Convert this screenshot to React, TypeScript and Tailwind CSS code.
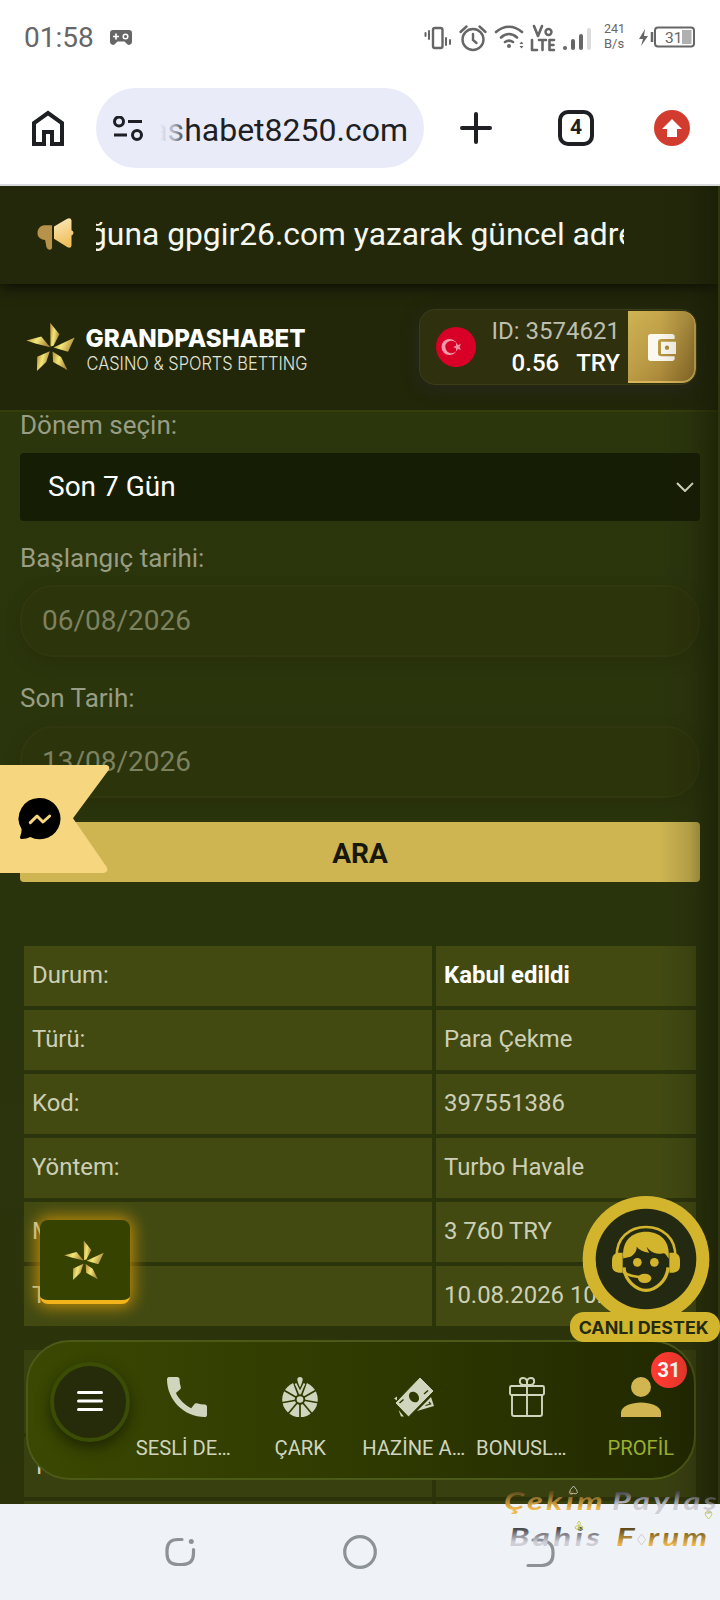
import React from 'react';

const rows = [
  { label: 'Durum:', value: 'Kabul edildi', strong: true },
  { label: 'Türü:', value: 'Para Çekme' },
  { label: 'Kod:', value: '397551386' },
  { label: 'Yöntem:', value: 'Turbo Havale' },
  { label: 'Miktar:', value: '3 760 TRY' },
  { label: 'Tarih:', value: '10.08.2026 10:04' },
];

const Pinwheel: React.FC<{ className?: string; id: string }> = ({ className, id }) => (
  <svg className={className} viewBox="78 411 148 148">
    <defs>
      <linearGradient id={id} x1="0" y1="0" x2="1" y2="0.3">
        <stop offset="0" stopColor="#b58a35" />
        <stop offset="0.5" stopColor="#f3e878" />
        <stop offset="1" stopColor="#b08c3c" />
      </linearGradient>
    </defs>
    <g fill={`url(#${id})`}>
      <path d="M151 413l28 35-18 35-9 2z" />
      <path d="M225 458l-20 43-44-13z" />
      <path d="M158 500l26 17 19 39-43-24z" />
      <path d="M150 499l-11 33-28 27 1-43z" />
      <path d="M79 467l45-12 27 32-42-10z" />
    </g>
  </svg>
);

const StatusBar = () => (
  <div className="flex h-[74px] shrink-0 items-center text-[#666]">
    <span className="mt-[2px] ml-6 text-[28px] leading-none">01:58</span>
    <svg className="ml-[16px] h-[15px] w-[22px]" viewBox="0 0 22 15">
      <path d="M3 0h16a3 3 0 0 1 3 3v9a3 3 0 0 1-5.500 1.500L14.500 11.500h-7l-2 2A3 3 0 0 1 0 12V3a3 3 0 0 1 3-3z" fill="#666" />
      <path d="M6 3.500v6M3 6.500h6" stroke="#fff" strokeWidth="1.700" />
      <circle cx="15.500" cy="6.500" r="2.300" fill="none" stroke="#fff" strokeWidth="1.500" />
    </svg>
    <svg className="ml-auto h-[30px] w-[208px]" viewBox="424 20 208 30" fill="none" stroke="#666" strokeWidth="2" strokeLinecap="round">
      <rect x="433" y="26" width="9.500" height="20" rx="2" strokeWidth="2.400" />
      <path d="M425.500 31v3M429 29v8M446 36v7M450 38v4" />
      <circle cx="473" cy="37.500" r="10.500" strokeWidth="2.400" />
      <path d="M473 32v6l3.500 3M460.500 30l6-5.500M485.500 30l-6-5.500" strokeWidth="2.400" />
      <path d="M496 30c8-7 18-7 26 0M501 35.500c5-4.500 11-4.500 16 0M505 40c3-2 5-2 8 0" strokeWidth="2.600" />
      <circle cx="509" cy="44" r="2" fill="#666" stroke="none" />
      <path d="M519.500 42l2-2.500 2 2.500zM519.500 44l2 2.500 2-2.500z" fill="#666" stroke="none" />
      <path d="M534 24l4 10 4-10M532 38v10h5M539 38h7M542.500 38v10M554 38h-4.500v10h4.500M549.500 43h4" strokeWidth="2.600" strokeLinejoin="round" />
      <circle cx="548.500" cy="30" r="3" strokeWidth="2.400" />
      <circle cx="565" cy="46" r="2" fill="#666" stroke="none" />
      <path d="M573 39v7M581 34v12" strokeWidth="4" />
      <path d="M589 28v18" stroke="#dcdcdc" strokeWidth="4" />
    </svg>
    <div className="-ml-[28px] w-[29px] text-[13px] leading-[15px] -mt-[2px]">
      <div className="text-[12.500px]">241</div>
      <div>B/s</div>
    </div>
    <svg className="mr-6 ml-1 h-[24px] w-[59px]" viewBox="637 24 59 24">
      <path d="M645 28l-6 10h4l-2 7 7-10h-4z" fill="#666" />
      <path d="M652 31v10" stroke="#666" strokeWidth="2.500" />
      <rect x="655" y="26.500" width="39" height="19" rx="3" fill="none" stroke="#666" strokeWidth="2" />
      <rect x="682" y="29" width="9.500" height="14" fill="#b0b0b0" />
      <text x="665" y="41.500" fontSize="15.500" fill="#666">31</text>
    </svg>
  </div>
);

const BrowserBar = () => (
  <div className="relative z-20 flex h-[112px] shrink-0 items-start border-b-2 border-[#d9dadc] bg-white pt-[14px]">
    <svg className="mt-[21px] ml-[31px] h-[38px] w-[34px]" viewBox="0 0 34 38" fill="none" stroke="#1e1f22" strokeWidth="4">
      <path d="M3 35V14L17 4l14 10v21H21V23h-8v12z" />
    </svg>
    <div className="ml-[31px] flex h-20 w-[328px] items-center rounded-full bg-[#e9ebf8]">
      <svg className="ml-[17px] h-[25px] w-[31px]" viewBox="0 0 31 25" fill="none" stroke="#1e1f25" strokeWidth="3">
        <circle cx="6" cy="5.500" r="4.500" />
        <path d="M15 5.500h14M1 19h13" />
        <circle cx="24" cy="19" r="4.500" />
      </svg>
      <div className="relative ml-4 flex h-12 w-[248px] items-center justify-end overflow-hidden">
        <span className="mt-[3px] text-[32px] whitespace-nowrap text-[#1e1f25]">ashabet8250.com</span>
        <div className="absolute inset-y-0 left-0 w-7 bg-gradient-to-r from-[#e9ebf8] via-[#e9ebf8]/70 to-transparent" />
      </div>
    </div>
    <svg className="mt-[24px] ml-9 h-8 w-8" viewBox="0 0 32 32" stroke="#1e1f22" strokeWidth="4" strokeLinecap="round">
      <path d="M16 2v28M2 16h28" />
    </svg>
    <div className="mt-[22px] ml-[66px] flex h-9 w-9 items-center justify-center rounded-[10px] border-4 border-[#1e1f22] text-[21px] font-bold text-[#1e1f22]">
      4
    </div>
    <svg className="mt-[22px] ml-[60px] h-9 w-9" viewBox="0 0 36 36">
      <circle cx="18" cy="18" r="18" fill="#d23c2e" />
      <path d="M18 9l10 10h-5v8H13v-8H8z" fill="#fff" />
    </svg>
  </div>
);

const Ticker = () => (
  <div className="relative z-10 flex h-[98px] shrink-0 items-center bg-[#23280a] shadow-[0_2px_14px_rgba(0,0,0,0.8)]">
    <svg className="-mt-[2px] ml-[37px] h-8 w-[37px]" viewBox="111 96 111 97">
      <defs>
        <linearGradient id="horn" x1="0" y1="0" x2="0.3" y2="1">
          <stop offset="0" stopColor="#fbeac0" />
          <stop offset="1" stopColor="#f0bf5c" />
        </linearGradient>
      </defs>
      <path d="M156 118v70q-2 5-9 4-6-1-8-8l-4-21c-14-2-24-9-23-23 1-14 10-22 24-22z" fill="#b6924b" />
      <path d="M162 122l40-24q11-4 13 5v30q6 2 6 8t-6 8v31q-2 9-12 5l-41-26z" fill="url(#horn)" />
    </svg>
    <div className="-mt-[2px] ml-[22px] w-[528px] overflow-hidden whitespace-nowrap">
      <span className="-ml-[7px] text-[31.800px] leading-[48px] text-[#f6f7ee]">ğuna gpgir26.com yazarak güncel adre</span>
    </div>
  </div>
);

const Header = () => (
  <div className="flex h-32 shrink-0 items-start border-b-2 border-[#363e0c] bg-[#22270a]">
    <Pinwheel className="mt-[38px] ml-[26px] h-[49px] w-[49px]" id="logoGold" />
    <svg className="mt-[38px] ml-[9px] h-[54px] w-[226px]" viewBox="84 322 226 54">
      <text x="85.500" y="347" textLength="220" lengthAdjust="spacingAndGlyphs" fontSize="25" fontWeight="800" fill="#fff" fontFamily="Inter, sans-serif">GRANDPASHABET</text>
      <text x="86.500" y="370" textLength="221" lengthAdjust="spacingAndGlyphs" fontSize="18.500" fontWeight="300" fill="#e2e4d5" fontFamily="Inter, sans-serif">CASINO &amp; SPORTS BETTING</text>
    </svg>
    <div className="mt-[25px] ml-[109px] flex h-[76px] w-[278px] overflow-hidden rounded-[16px] border border-[#3b3d19] bg-[#2e300e] shadow-[0_4px_16px_rgba(40,40,30,0.9)]">
      <svg className="mt-[17px] ml-4 h-10 w-10" viewBox="0 0 40 40">
        <circle cx="20" cy="20" r="20" fill="#d80027" />
        <circle cx="13.500" cy="20" r="8" fill="#f29aa9" />
        <circle cx="15.500" cy="20" r="6.200" fill="#d80027" />
        <path d="M17 20l3-1.200v-3l2 2.300 3-1-1.500 2.900 1.500 2.900-3-1-2 2.300v-3z" fill="#f08c9d" />
      </svg>
      <div className="ml-auto pr-2 text-right text-[24px] leading-8">
        <div className="mt-[5px] text-[#bcbfae]">ID: 3574621</div>
        <div className="font-medium whitespace-pre text-white">0.56<span className="ml-[17px]">TRY</span></div>
      </div>
      <div className="my-px flex w-[68px] items-center justify-center rounded-r-[14px] border-r-2 border-b-2 border-[#d8b55a] bg-gradient-to-br from-[#cfb353] via-[#bb9a45] to-[#95732c]">
        <svg className="mt-[2px] ml-[2px] h-[27px] w-[28px]" viewBox="864 445 84 81">
          <path d="M872 445h64q8 0 8 8v7h-40q-10 0-10 10v32q0 10 10 10h40v6q0 8-8 8h-64q-8 0-8-8v-65q0-8 8-8z" fill="#fbf8f0" />
          <path d="M903 468h45v37h-45z" fill="#fbf8f0" />
          <circle cx="921" cy="486" r="6.500" fill="#ab8a3c" />
        </svg>
      </div>
    </div>
  </div>
);

const DateField: React.FC<{ value: string }> = ({ value }) => (
  <div className="h-[72px] rounded-[34px] border-2 border-[#31380f] bg-[#2c340b] pl-5 text-[28px] leading-[68px] text-[#7c8160] shadow-[0_6px_14px_rgba(38,42,8,0.5)]">
    {value}
  </div>
);

const SearchForm = () => (
  <div className="px-5 text-[26px] leading-8 text-[#989d83]">
    <div className="-mt-[3px]">Dönem seçin:</div>
    <div className="mt-3 flex h-[68px] items-center rounded-[4px] bg-[#161d05] pr-[6px] pl-7 text-[28px] text-white">
      Son 7 Gün
      <svg className="ml-auto h-[10px] w-[18px]" viewBox="0 0 18 10" fill="none" stroke="#e4e8d2" strokeWidth="2">
        <path d="M1 1l8 8 8-8" />
      </svg>
    </div>
    <div className="mt-[21px] mb-[11px]">Başlangıç tarihi:</div>
    <DateField value="06/08/2026" />
    <div className="mt-[25px] mb-3">Son Tarih:</div>
    <DateField value="13/08/2026" />
    <button className="mt-6 block h-[60px] w-full rounded-[4px] bg-[#ceb552] pt-[3px] text-[28px] font-bold text-[#17180a]">
      ARA
    </button>
  </div>
);

const Transactions = () => (
  <div className="px-6 text-[23.900px] text-[#cdd0b6]">
    <div className="mt-16 grid grid-cols-[408px_260px] gap-1">
      {rows.map((row) => (
        <React.Fragment key={row.label}>
          <div className="h-[60px] bg-[#424a12] pl-2 leading-[58px]">{row.label}</div>
          <div className={row.strong ? 'h-[60px] bg-[#424a12] pl-2 leading-[58px] font-bold text-white' : 'h-[60px] bg-[#424a12] pl-2 leading-[58px] whitespace-nowrap'}>
            {row.value}
          </div>
        </React.Fragment>
      ))}
    </div>
    <div className="mt-6 grid grid-cols-[408px_260px] gap-1">
      <div className="h-[83px] bg-[#394010]" />
      <div className="h-[83px] bg-[#394010]" />
      <div className="h-[60px] bg-[#394010] pl-2 leading-[58px]">Türü:</div>
      <div className="h-[60px] bg-[#394010]" />
      <div className="h-[60px] bg-[#394010]" />
      <div className="h-[60px] bg-[#394010]" />
    </div>
  </div>
);

const MessengerRibbon = () => (
  <svg className="absolute top-[765px] left-0 h-[108px] w-[110px]" viewBox="0 75 330 324">
    <path d="M0 75h318q14 2 8 15L219 235l101 146q7 14-9 18H0z" fill="#f7d680" />
    <path d="M121 174a62 62 0 1 1-30 117q-14 7-28 6-5-2-2-9 4-10 4-20a62 62 0 0 1 56-94z" fill="#000" />
    <path d="M91 248l20-20 18 18 20-18" fill="none" stroke="#f7d680" strokeWidth="9" strokeLinecap="round" strokeLinejoin="round" />
  </svg>
);

const PinwheelButton = () => (
  <div className="absolute top-[1220px] left-10 flex h-[84px] w-[90px] items-center justify-center rounded-[8px] border-b-4 border-[#f2b31b] bg-[#354200] shadow-[0_0_16px_3px_rgba(214,150,10,0.85)]">
    <Pinwheel className="-mt-[1px] -ml-[2px] h-10 w-10" id="buttonGold" />
  </div>
);

const LiveSupport = () => (
  <svg className="absolute top-[1196px] left-[570px] z-20 h-[146px] w-[150px]" viewBox="630 48 450 438">
    <circle cx="858" cy="238" r="190" fill="#d3b52d" />
    <rect x="630" y="396" width="450" height="90" rx="42" fill="#d3b52d" />
    <circle cx="858" cy="237" r="151" fill="#242a12" />
    {/* headband and hair */}
    <path d="M770 232c-2-58 38-91 88-91s90 33 88 91" fill="none" stroke="#d3b52d" strokeWidth="8" />
    <path d="M790 236c-6-54 26-81 68-81s74 27 68 81c-6-8-8-14-14-16-14 4-40 0-52-20 2 8 4 12 8 18-18-2-30-8-38-18 2 14-12 30-26 32-8 2-12 2-14 4z" fill="#d3b52d" />
    <path d="M775 218q-19 2-19 22v16q0 20 20 22h12v-60zM941 218q19 2 19 22v16q0 20-20 22h-12v-60z" fill="#d3b52d" />
    <path d="M792 262c2 40 38 69 66 69s64-29 66-69" fill="none" stroke="#d3b52d" strokeWidth="10" />
    <circle cx="832" cy="247" r="13" fill="#d3b52d" />
    <circle cx="883" cy="247" r="13" fill="#d3b52d" />
    <path d="M790 275c16 14 36 16 62 16" fill="none" stroke="#d3b52d" strokeWidth="8" />
    <ellipse cx="854" cy="295" rx="20" ry="14" fill="#d3b52d" />
    <text x="656" y="463" textLength="390" lengthAdjust="spacingAndGlyphs" fontSize="50" fontWeight="700" fill="#242a0c" fontFamily="Inter, sans-serif">CANLI DESTEK</text>
  </svg>
);

const wheelSpokes = [20, 60, 100, 140, 180, 220, 260, 300, 340];

const WheelIcon = () => (
  <svg className="h-10 w-10" viewBox="0 0 40 40">
    <circle cx="20" cy="22.500" r="17.800" fill="#d0d5bd" />
    {wheelSpokes.map((angle) => (
      <path key={angle} d="M20 22.500V4" stroke="#2f3b00" strokeWidth="1.700" transform={`rotate(${angle} 20 22.500)`} />
    ))}
    <path d="M13.500 3.500L20 17l6.500-13.500z" fill="#2f3b00" />
    <path d="M15.500 6.500l4.500 9 4.500-9" fill="none" stroke="#d0d5bd" strokeWidth="1.800" />
    <path d="M20 0a2.700 2.700 0 0 1 2.700 2.700Q22.500 5 20 10.500 17.500 5 17.300 2.700A2.700 2.700 0 0 1 20 0z" fill="#d0d5bd" />
    <circle cx="20" cy="22.500" r="5.200" fill="#2f3b00" />
    <circle cx="20" cy="22.500" r="3.300" fill="#d0d5bd" />
  </svg>
);

const MoneyIcon = () => (
  <svg className="h-10 w-10" viewBox="0 0 40 40">
    <path d="M0 21.500l3-2v4zM4.500 33l5.500 6.500H7zM37 20l3 9-17 5z" fill="#d0d5bd" />
    <path d="M35 25l1.500 2-5 1.500" fill="none" stroke="#2e3800" strokeWidth="1.300" />
    <path d="M26 0l14 14L14.500 40 1 26z" fill="#d0d5bd" stroke="#2e3800" />
    <ellipse cx="20" cy="20" rx="4.500" ry="5.800" transform="rotate(-40 20 20)" fill="#2e3800" />
    <path d="M5.500 26l4-3.500M30 17l4-3.500" stroke="#2e3800" strokeWidth="1.500" />
  </svg>
);

const navItems = [
  {
    label: 'SESLİ DE…',
    labelClass: 'mr-[7px] text-[#d0d5bd]',
    icon: (
      <svg className="h-10 w-10" viewBox="3 3 18 18" fill="#d0d5bd">
        <path d="M20.01 15.380c-1.230 0-2.420-.2-3.530-.560a.977.977 0 0 0-1.010.240l-1.570 1.970c-2.830-1.350-5.480-3.900-6.890-6.830l1.950-1.660c.270-.280.350-.670.240-1.020-.370-1.110-.560-2.300-.560-3.530 0-.540-.450-.990-.990-.990H4.190C3.650 3 3 3.240 3 3.990 3 13.280 10.730 21 20.010 21c.710 0 .990-.630.990-1.180v-3.450c0-.540-.450-.990-.990-.990z" />
      </svg>
    ),
  },
  { label: 'ÇARK', labelClass: 'text-[#d0d5bd]', icon: <WheelIcon /> },
  { label: 'HAZİNE A…', labelClass: 'text-[#d0d5bd]', icon: <MoneyIcon /> },
  {
    label: 'BONUSL…',
    labelClass: 'mr-[12px] text-[#d0d5bd]',
    icon: (
      <svg className="h-10 w-10" viewBox="0 0 40 40" fill="none" stroke="#d0d5bd" strokeWidth="1.900">
        <rect x="3" y="9" width="34" height="9" rx="1.500" />
        <path d="M5 18v19q0 2 2 2h26q2 0 2-2V18M20 9v30" />
        <path d="M19 8h-3c-4.500-1-4-7 0-7s4 3 4 7c0-4 0-7 4-7s4.500 6 0 7z" />
      </svg>
    ),
  },
  {
    label: 'PROFİL',
    labelClass: 'text-[#9ab02c]',
    icon: (
      <svg className="h-10 w-10" viewBox="0 0 40 40" fill="#d1b550">
        <circle cx="20" cy="10" r="10" />
        <path d="M0 40v-4.500C0 29 11 25.500 20 25.500S40 29 40 35.500V40z" />
      </svg>
    ),
    badge: 31,
  },
];

const BottomNav = () => (
  <div className="absolute top-[1340px] left-[26px] flex h-[140px] w-[670px] rounded-[44px] border-2 border-[#4c5a17] bg-gradient-to-r from-[#3a4802] via-[#2f3a01] to-[#212800]">
    <div className="mt-5 ml-[22px] flex h-20 w-20 shrink-0 items-center justify-center rounded-full border-4 border-[#3b4c05] bg-[#262b09] shadow-[0_6px_14px_rgba(20,25,0,0.7)]">
      <svg className="-mt-[3px] h-5 w-[26px]" viewBox="0 0 26 20" stroke="#fff" strokeWidth="3" strokeLinecap="round">
        <path d="M1.500 1.500h23M1.500 10h23M1.500 18.500h23" />
      </svg>
    </div>
    <div className="flex">
      {navItems.map((item) => (
        <div key={item.label} className="relative flex w-[113.500px] flex-col items-center pt-[35px]">
          {item.icon}
          <span className={`mt-[19px] text-[20.200px] leading-6 whitespace-nowrap ${item.labelClass}`}>{item.label}</span>
          {item.badge && (
            <span className="absolute top-[10px] left-[67px] flex h-9 w-9 items-center justify-center rounded-full bg-[#fd3a2f] text-[20px] font-bold text-white">
              {item.badge}
            </span>
          )}
        </div>
      ))}
    </div>
  </div>
);

const SystemNav = () => (
  <div className="flex h-24 shrink-0 items-center justify-center bg-[#eff3f8]">
    <svg className="h-9 w-[400px]" viewBox="160 1534 400 36" fill="none" stroke="#8d9296" strokeWidth="3.200" strokeLinecap="round">
      <path d="M182 1539.500h-4q-11 0-11 11v3q0 11 11 11h4q11.500 0 11.500-11v-4" />
      <circle cx="191.300" cy="1541.500" r="2.500" fill="#8d9296" stroke="none" />
      <circle cx="360" cy="1552" r="15.300" />
      <path d="M533 1540h7q13 1 13 12v2q0 11-11 11.500h-14" />
    </svg>
  </div>
);

const Watermark = () => (
  <svg className="absolute top-[1480px] left-[500px] h-[76px] w-[220px]" viewBox="500 1480 220 76" fontFamily="Lato, sans-serif" fontStyle="italic" fontWeight="700" fontSize="25">
    <defs>
      <linearGradient id="wmGold" x1="0" y1="0" x2="0" y2="1">
        <stop offset="0.250" stopColor="#5d4a1c" />
        <stop offset="0.800" stopColor="#eeb74a" />
      </linearGradient>
      <linearGradient id="wmGrey" x1="0" y1="0" x2="0" y2="1">
        <stop offset="0.250" stopColor="#46474b" />
        <stop offset="0.700" stopColor="#cfcdd6" />
      </linearGradient>
    </defs>
    <g letterSpacing="2.500">
      <text x="504" y="1509.500" textLength="102" lengthAdjust="spacingAndGlyphs" fill="url(#wmGold)">Çekim</text>
      <text x="612" y="1509.500" textLength="108" lengthAdjust="spacingAndGlyphs" fill="url(#wmGrey)">Paylaş</text>
      <text x="509" y="1546" textLength="94" lengthAdjust="spacingAndGlyphs" fill="url(#wmGrey)">Bahis</text>
      <text x="616" y="1546" textLength="22" lengthAdjust="spacingAndGlyphs" fill="url(#wmGold)">F</text>
      <text x="648" y="1546" textLength="62" lengthAdjust="spacingAndGlyphs" fill="url(#wmGold)">rum</text>
    </g>
    <g fill="none" strokeWidth="1">
      <path d="M573.500 1486q4 4 4 6.500-1 2-4 1-3 1-4-1 0-2.500 4-6.500z" stroke="#b9bba5" />
      <path d="M708.500 1519q-5-5-2.500-7 2-1 2.500 1 .5-2 2.500-1 2.500 2-2.500 7z" stroke="#c8cb58" />
      <path d="M579 1526q-3-3 0-5 3 2 0 5 4-1 4 2-2 3-4 0-2 3-4 0 0-3 4-2v5" stroke="#c8cb58" />
      <path d="M641.500 1534l4 5.500-4 5.500-4-5.500z" stroke="#d9cdd0" />
    </g>
  </svg>
);

const App: React.FC = () => {
  return (
    <div className="relative flex h-[1600px] w-[720px] flex-col overflow-hidden bg-white font-[Roboto,sans-serif]">
      <StatusBar />
      <BrowserBar />
      <Ticker />
      <Header />
      <main className="h-[1092px] shrink-0 overflow-hidden bg-gradient-to-b from-[#2b360d] via-[#2a340c] to-[#2c330b]">
        <SearchForm />
        <Transactions />
      </main>
      <SystemNav />
      {/* scroll edge shade */}
      <div className="absolute top-[186px] right-0 z-10 h-[1318px] w-[60px] border-r-2 border-[#2d3512] bg-gradient-to-r from-transparent via-[#1b1c06]/15 to-[#151804]/55" />
      <MessengerRibbon />
      <PinwheelButton />
      <BottomNav />
      <LiveSupport />
      <Watermark />
    </div>
  );
};

export default App;
